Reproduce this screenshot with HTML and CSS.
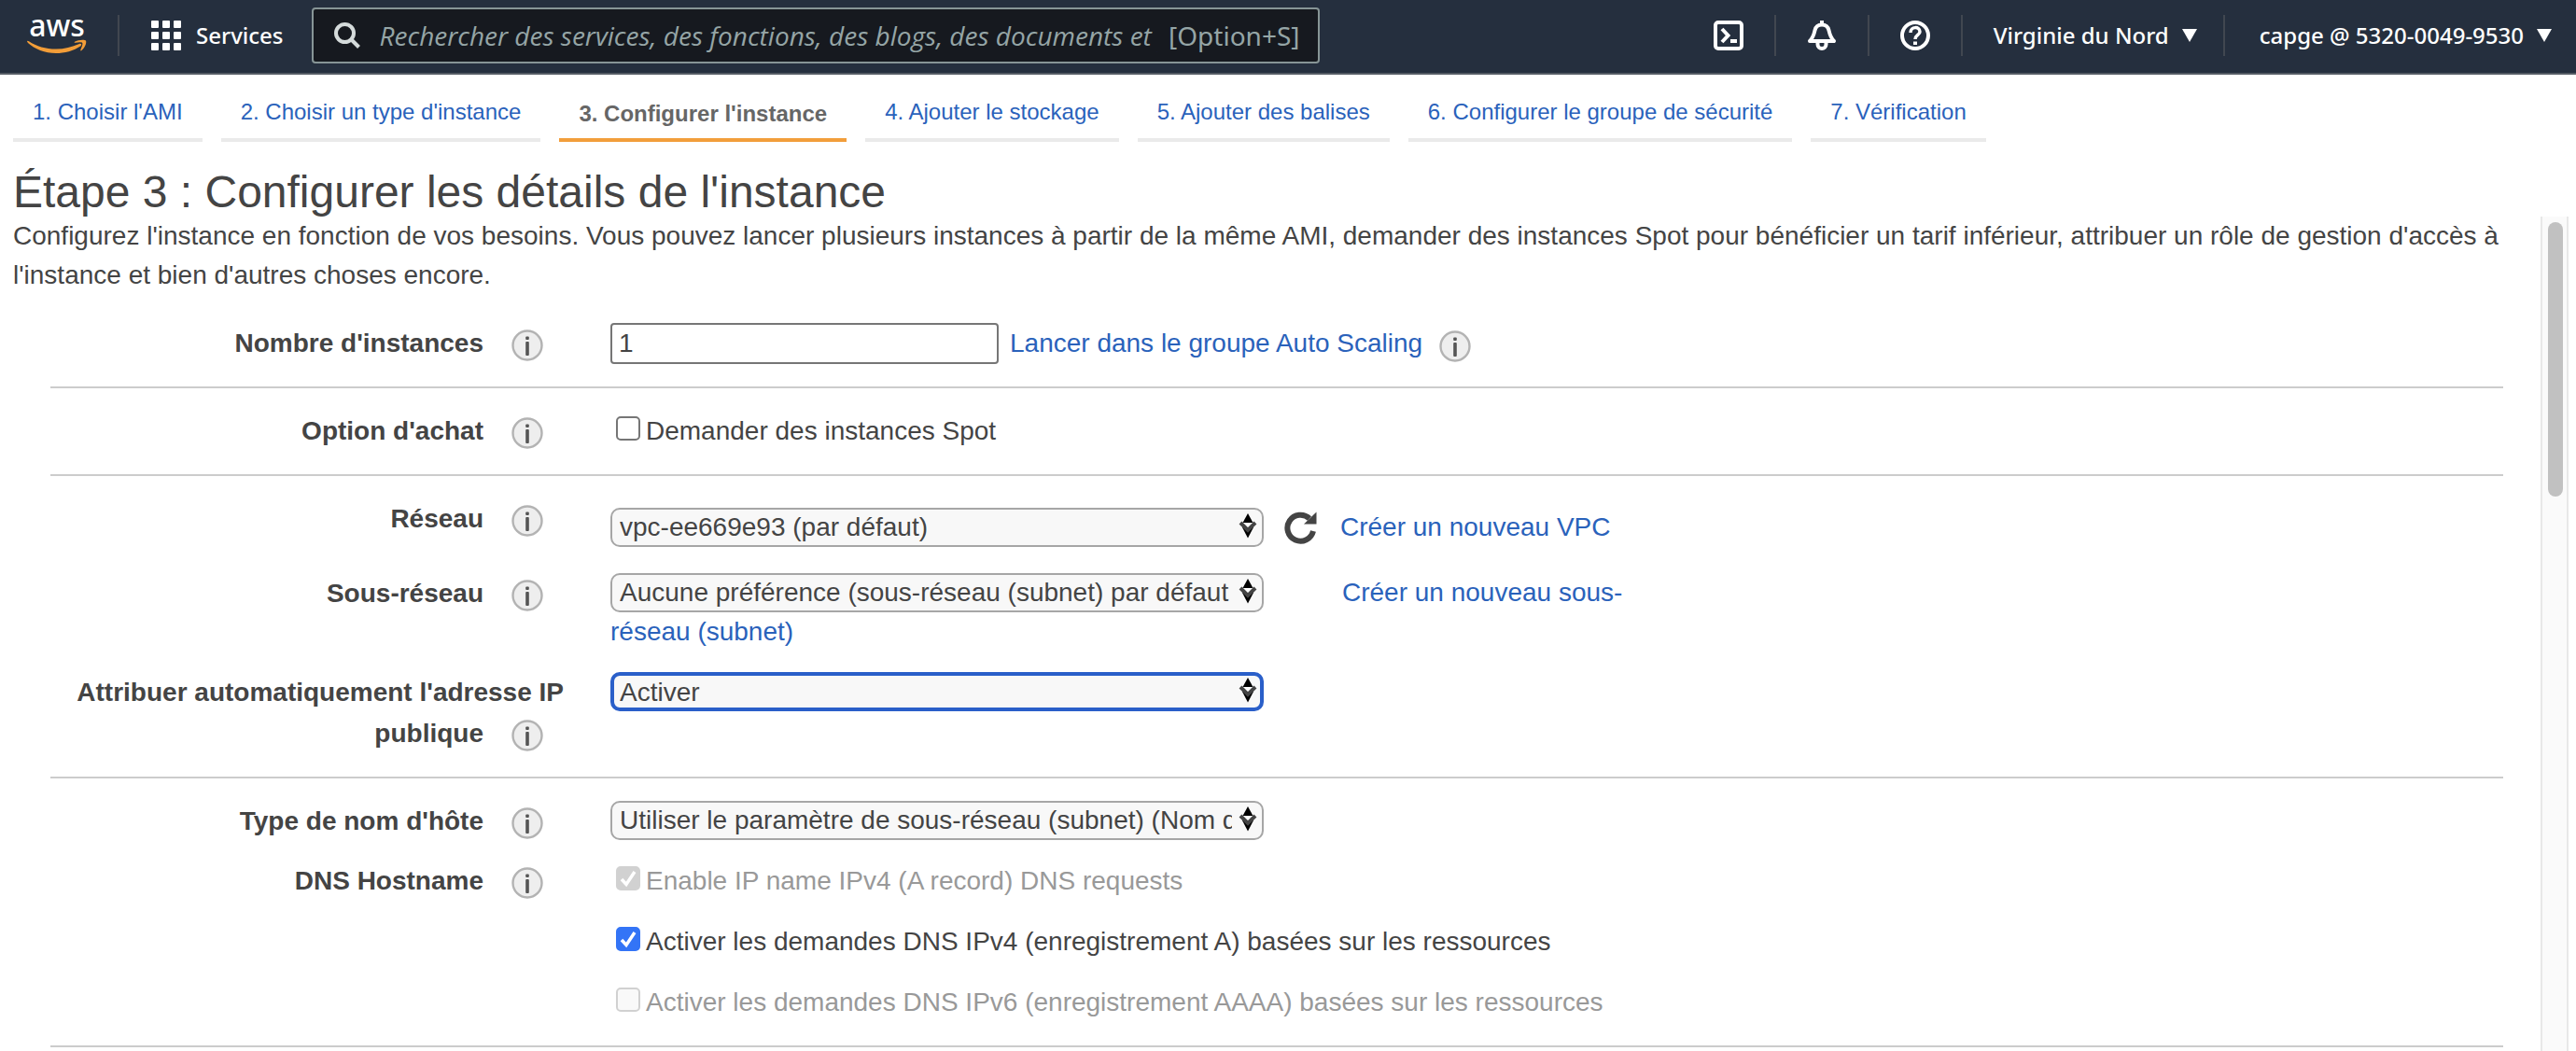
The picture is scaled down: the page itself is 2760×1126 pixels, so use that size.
FILE: index.html
```html
<!DOCTYPE html>
<html lang="fr">
<head>
<meta charset="utf-8">
<meta name="viewport" content="width=device-width, initial-scale=1">
<title>Étape 3 : Configurer les détails de l'instance</title>
<link rel="stylesheet" href="styles.css">
</head>
<body>
<svg class="sprite" aria-hidden="true">
  <symbol id="i-info" viewBox="0 0 34 34">
    <circle cx="17" cy="17" r="15.5" fill="#eee" stroke="#b3b3b3" stroke-width="2.4"/>
    <rect x="15.2" y="7.500" width="3.6" height="3.6" rx="1" fill="#555"/>
    <rect x="15.2" y="13" width="3.6" height="15" rx="1" fill="#555"/>
  </symbol>
  <symbol id="i-sort" viewBox="0 0 20 28">
    <path d="M10 0L15.500 10H4.500Z" fill="#000"/>
    <path d="M4 15L10 26.500L16 15Z" fill="#000"/>
    <path d="M5 10H15L10 16Z" fill="#fff"/>
    <path d="M2 10L10 18L18 10" fill="none" stroke="#444" stroke-width="4"/>
  </symbol>
  <symbol id="i-caret" viewBox="0 0 16 14"><path d="M0 0H16L8 14Z" fill="#fff"/></symbol>
</svg>

<header class="topbar">
  <a class="logo" href="#" aria-label="AWS">
    <span class="logo-text">aws</span>
    <svg class="logo-smile" viewBox="0 0 64 16" fill="#f29d38" aria-hidden="true">
      <path d="M0 2.500C0 1.500 1 1.500 2 2.200C10 7.500 20 10.500 31 10.500C40 10.500 48 8.500 56 5C58 4.200 59 6 57.500 7.200C50 12.500 40 15 31 15C19 15 8 10.500 1 4Z"/>
      <path d="M51 2.800C54 .5 62 0 63 1.500C64 4 62 9 58.500 12C57.500 12.800 57 12.300 57.400 11.300C58.500 8.500 60 5 59.200 4C58.200 3 54.500 3.400 52 3.800C50.500 4 50.300 3.400 51 2.800Z"/>
    </svg>
  </a>
  <button class="services" type="button">
    <svg class="icon-32" viewBox="0 0 32 32" fill="#fff" aria-hidden="true">
      <rect x="0" y="0" width="8" height="8" rx="1"/><rect x="12" y="0" width="8" height="8" rx="1"/><rect x="24" y="0" width="8" height="8" rx="1"/>
      <rect x="0" y="12" width="8" height="8" rx="1"/><rect x="12" y="12" width="8" height="8" rx="1"/><rect x="24" y="12" width="8" height="8" rx="1"/>
      <rect x="0" y="24" width="8" height="8" rx="1"/><rect x="12" y="24" width="8" height="8" rx="1"/><rect x="24" y="24" width="8" height="8" rx="1"/>
    </svg>
    <span>Services</span>
  </button>
  <div class="search">
    <svg class="search-icon" viewBox="0 0 28 28" fill="none" stroke="#d5dbdb" stroke-width="4" aria-hidden="true">
      <circle cx="11.500" cy="11.500" r="9.500"/><path d="M18.500 18.500L26.500 26.500"/>
    </svg>
    <input class="search-input" type="search" aria-label="Rechercher" placeholder="Rechercher des services, des fonctions, des blogs, des documents et plus encore">
    <span class="search-key">[Option+S]</span>
  </div>
  <nav class="tools" aria-label="Compte">
    <button class="tool" type="button" aria-label="CloudShell">
      <svg class="icon-32" viewBox="0 0 32 32" fill="none" stroke="#fff" stroke-width="4" aria-hidden="true">
        <rect x="2" y="2" width="28" height="28" rx="3"/><path d="M9 9L15.500 16L9 23"/><path d="M18 22H25"/>
      </svg>
    </button>
    <button class="tool" type="button" aria-label="Notifications">
      <svg class="icon-32" viewBox="0 0 32 32" fill="none" stroke="#fff" stroke-width="4" stroke-linejoin="round" aria-hidden="true">
        <path d="M3 22C7 18 7.500 15 8.500 10.500C9.500 6 12 4.500 16 4.500C20 4.500 22.500 6 23.500 10.500C24.500 15 25 18 29 22Z"/>
        <path d="M16 0V4"/><path d="M11.500 23V25.500C11.500 31.500 20.500 31.500 20.500 25.500V23"/>
      </svg>
    </button>
    <button class="tool" type="button" aria-label="Aide">
      <svg class="icon-32" viewBox="0 0 32 32" fill="none" stroke="#fff" stroke-width="4" aria-hidden="true">
        <circle cx="16" cy="16" r="14"/>
        <path d="M11 13C11 6 21 6 21 12C21 15.500 16 15.500 16 20" stroke-width="3.500"/><path d="M16 22.500V26"/>
      </svg>
    </button>
    <button class="tool tool-region" type="button"><span>Virginie du Nord</span><svg class="caret" aria-hidden="true"><use href="#i-caret"/></svg></button>
    <button class="tool tool-account" type="button"><span>capge @ 5320-0049-9530</span><svg class="caret" aria-hidden="true"><use href="#i-caret"/></svg></button>
  </nav>
</header>

<nav class="steps" aria-label="Étapes">
  <a class="step" href="#">1. Choisir l'AMI</a>
  <a class="step" href="#">2. Choisir un type d'instance</a>
  <a class="step step-current" href="#" aria-current="step">3. Configurer l'instance</a>
  <a class="step" href="#">4. Ajouter le stockage</a>
  <a class="step" href="#">5. Ajouter des balises</a>
  <a class="step" href="#">6. Configurer le groupe de sécurité</a>
  <a class="step" href="#">7. Vérification</a>
</nav>

<h1 class="title">Étape 3 : Configurer les détails de l'instance</h1>

<div class="body">
  <main class="content">
    <p class="intro">Configurez l'instance en fonction de vos besoins. Vous pouvez lancer plusieurs instances à partir de la même AMI, demander des instances Spot pour bénéficier un tarif inférieur, attribuer un rôle de gestion d'accès à l'instance et bien d'autres choses encore.</p>
    <form class="form">
      <section class="group">
        <div class="row">
          <div class="label"><label for="count">Nombre d'instances</label><button class="info" type="button" aria-label="Aide"><svg><use href="#i-info"/></svg></button></div>
          <div class="field field-line">
            <input class="text" id="count" type="text" value="1">
            <a class="link" href="#">Lancer dans le groupe Auto Scaling</a>
            <button class="info info-tight" type="button" aria-label="Aide"><svg><use href="#i-info"/></svg></button>
          </div>
        </div>
      </section>

      <section class="group">
        <div class="row">
          <div class="label"><span>Option d'achat</span><button class="info" type="button" aria-label="Aide"><svg><use href="#i-info"/></svg></button></div>
          <div class="field">
            <label class="check"><input type="checkbox"><span>Demander des instances Spot</span></label>
          </div>
        </div>
      </section>

      <section class="group">
        <div class="row">
          <div class="label"><label for="network">Réseau</label><button class="info" type="button" aria-label="Aide"><svg><use href="#i-info"/></svg></button></div>
          <div class="field field-line field-network">
            <span class="select"><select id="network"><option>vpc-ee669e93 (par défaut)</option></select><svg aria-hidden="true"><use href="#i-sort"/></svg></span>
            <button class="refresh" type="button" aria-label="Actualiser">
              <svg viewBox="0 0 36 36" aria-hidden="true">
                <path d="M31 22A14 14 0 1 1 27 8.500" fill="none" stroke="#444" stroke-width="6"/>
                <path d="M34.500 1.500V14.500H21Z" fill="#444"/>
              </svg>
            </button>
            <a class="link" href="#">Créer un nouveau VPC</a>
          </div>
        </div>
        <div class="row">
          <div class="label"><label for="subnet">Sous-réseau</label><button class="info" type="button" aria-label="Aide"><svg><use href="#i-info"/></svg></button></div>
          <div class="field field-wrap">
            <span class="select"><select id="subnet"><option>Aucune préférence (sous-réseau (subnet) par défaut</option></select><svg aria-hidden="true"><use href="#i-sort"/></svg></span><a class="link link-after" href="#">Créer un nouveau sous-réseau (subnet)</a>
          </div>
        </div>
        <div class="row">
          <div class="label"><label for="public-ip">Attribuer automatiquement l'adresse IP </label><span class="keep"><label for="public-ip">publique</label><button class="info" type="button" aria-label="Aide"><svg><use href="#i-info"/></svg></button></span></div>
          <div class="field field-wrap">
            <span class="select select-focus"><select id="public-ip"><option>Activer</option></select><svg aria-hidden="true"><use href="#i-sort"/></svg></span>
          </div>
        </div>
      </section>

      <section class="group group-host">
        <div class="row">
          <div class="label"><label for="host-type">Type de nom d'hôte</label><button class="info" type="button" aria-label="Aide"><svg><use href="#i-info"/></svg></button></div>
          <div class="field field-wrap">
            <span class="select"><select id="host-type"><option>Utiliser le paramètre de sous-réseau (subnet) (Nom de l'adresse IP)</option></select><svg aria-hidden="true"><use href="#i-sort"/></svg></span>
          </div>
        </div>
        <div class="row">
          <div class="label"><span>DNS Hostname</span><button class="info" type="button" aria-label="Aide"><svg><use href="#i-info"/></svg></button></div>
          <div class="field checks">
            <label class="check check-off"><input type="checkbox" checked disabled><span>Enable IP name IPv4 (A record) DNS requests</span></label>
            <label class="check"><input type="checkbox" checked><span>Activer les demandes DNS IPv4 (enregistrement A) basées sur les ressources</span></label>
            <label class="check check-off"><input type="checkbox" disabled><span>Activer les demandes DNS IPv6 (enregistrement AAAA) basées sur les ressources</span></label>
          </div>
        </div>
      </section>
    </form>
  </main>
  <div class="scrollbar" aria-hidden="true"><div class="thumb"></div></div>
</div>
</body>
</html>
```
FILE: styles.css
```css
* { box-sizing: border-box; }

body {
  margin: 0;
  height: 100vh;
  display: flex;
  flex-direction: column;
  overflow: hidden;
  background: #fff;
  color: #444;
  font: 28px/44px "Liberation Sans", Arial, sans-serif;
}

button {
  padding: 0;
  border: 0;
  background: none;
  color: inherit;
  font: inherit;
  cursor: pointer;
}

a { color: #2a62bb; text-decoration: none; }

.sprite { display: none; }

/* Top bar */
.topbar {
  flex: none;
  display: flex;
  align-items: center;
  height: 80px;
  padding-left: 30px;
  padding-bottom: 2px;
  border-bottom: 2px solid #545b64;
  background: #252f3e;
  color: #fff;
  font: 500 24px/32px "Noto Sans", "Open Sans", sans-serif;
}

.logo {
  display: flex;
  flex-direction: column;
  align-items: center;
  width: 98px;
  height: 44px;
  padding-right: 34px;
  border-right: 2px solid #414750;
  color: #fff;
}

.logo-text { font-size: 32px; font-weight: 500; line-height: 22px; }
.logo-smile { flex: none; width: 64px; height: 16px; margin-top: 4px; }

.services { display: flex; align-items: center; gap: 16px; margin: 0 31px 0 34px; }
.icon-32 { display: block; width: 32px; height: 32px; }

.search {
  flex: 0 1 1080px;
  display: flex;
  align-items: center;
  height: 60px;
  padding: 0 20px 0 22px;
  border: 2px solid #879596;
  border-radius: 4px;
  background: #16191f;
  color: #95a5a6;
  font-size: 28px;
  font-weight: 400;
}

.search-icon { flex: none; width: 28px; height: 28px; margin-right: 20px; }

.search-input {
  flex: 1;
  min-width: 0;
  height: 48px;
  margin-right: 12px;
  padding: 0;
  border: 0;
  outline: 0;
  background: none;
  color: #fff;
  font: inherit;
  font-family: "Open Sans", sans-serif;
}

.search-input::-webkit-search-cancel-button { display: none; }
.search-input::placeholder { color: #95a5a6; font-style: italic; }

.tools { display: flex; margin-left: auto; }
.tool {
  display: flex;
  align-items: center;
  gap: 14px;
  height: 44px;
  padding: 0 33px;
  border-left: 2px solid #414750;
}
.tool:first-child { border-left: 0; }
.tool-region { padding-right: 28px; }
.tool-account { padding: 0 26px 0 37px; }
.caret { width: 16px; height: 14px; }

/* Wizard steps */
.steps { flex: none; display: flex; gap: 20px; height: 72px; padding: 0 14px; }
.step {
  padding: 24px 21px 0;
  border-bottom: 4px solid #eaeaea;
  font-size: 24px;
  line-height: 32px;
}
.step-current {
  padding-top: 26px;
  border-color: #f29e3b;
  color: #666;
  font-weight: 700;
}

.title {
  flex: none;
  margin: 0;
  padding: 28px 14px 0;
  font-size: 48px;
  font-weight: 400;
  line-height: 52px;
}

/* Scrolling body */
.body { flex: 1; min-height: 0; display: flex; padding-right: 8px; }
.content { flex: 1; min-width: 0; overflow: hidden; }
.intro { margin: 0; padding: 0 16px 30px 14px; line-height: 42px; }

.scrollbar {
  flex: none;
  width: 30px;
  padding: 6px;
  border: solid #e8e8e8;
  border-width: 0 2px;
  background: #fafafa;
}
.thumb { width: 16px; height: 294px; border-radius: 8px; background: #c1c1c1; }

/* Form */
.form { padding: 0 40px 0 54px; }
.group {
  display: flex;
  flex-direction: column;
  gap: 22px;
  padding: 24px 0;
  border-bottom: 2px solid #ccc;
}
.group:first-child { padding-top: 0; }
.group-host { gap: 20px; }

.row { display: grid; grid-template-columns: 550px minmax(0, 1130px); column-gap: 50px; }
.label { font-weight: 700; text-align: right; }
.keep { white-space: nowrap; }

.info { width: 34px; height: 34px; margin: 0 22px 0 30px; vertical-align: -10px; line-height: 0; }
.info svg { display: block; width: 34px; height: 34px; }
.info-tight { margin: 6px 0 0 18px; }

.field-line { display: flex; align-items: center; }
.field-network { padding: 10px 0 6px; line-height: 42px; }
.field-wrap { line-height: 42px; }

.text {
  width: 416px;
  height: 44px;
  margin-right: 12px;
  padding: 0 7px;
  border: 2px solid #767676;
  border-radius: 4px;
  background: #fff;
  color: #444;
  font: inherit;
}

.select { position: relative; display: inline-block; width: 700px; height: 42px; vertical-align: top; }
.select select {
  appearance: none;
  width: 100%;
  height: 42px;
  padding: 0 32px 0 8px;
  border: 2px solid #a6a6a6;
  border-radius: 10px;
  background: #f8f8f8;
  color: #444;
  font: inherit;
  line-height: 36px;
}
.select svg { position: absolute; top: 6px; right: 7px; width: 20px; height: 28px; pointer-events: none; }
.select-focus select { padding: 0 30px 0 6px; border: 4px solid #2a5fc9; outline: 0; }

.refresh { width: 36px; height: 36px; margin: 0 24px 0 22px; }
.refresh svg { display: block; width: 36px; height: 36px; }
.link-after { margin-left: 84px; }

.checks { display: flex; flex-direction: column; gap: 21px; }
.check { display: flex; gap: 6px; padding-left: 6px; }
.check input {
  appearance: none;
  width: 26px;
  height: 26px;
  margin: 6px 0 0;
  border: 2px solid #767676;
  border-radius: 5px;
  background: #fff;
}
.check input:checked {
  border-color: #3374f6;
  background: #3374f6 url("data:image/svg+xml,%3Csvg xmlns='http://www.w3.org/2000/svg' viewBox='0 0 22 22'%3E%3Cpath d='M4 12L9 17.500L18 4' fill='none' stroke='%23fff' stroke-width='3.500'/%3E%3C/svg%3E") center / 22px 22px no-repeat;
}
.check input:disabled { border-color: #d1d1d1; background-color: #f9f9f9; }
.check input:checked:disabled { background-color: #d1d1d1; }
.check-off { color: #999; }
```
